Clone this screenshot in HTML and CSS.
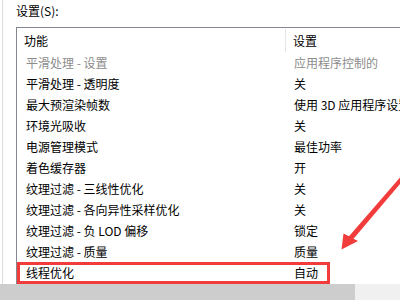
FILE: index.html
```html
<!DOCTYPE html>
<html lang="zh-CN">
<head>
<meta charset="utf-8">
<title>设置</title>
<link rel="stylesheet" href="styles.css">
</head>
<body>
<div class="page">
  <div class="frame">
    <div class="label">设置(S):</div>
    <div class="listbox">
      <div class="row header">
        <div class="c1">功能</div>
        <div class="c2">设置</div>
      </div>
      <div class="row disabled"><div class="c1">平滑处理 - 设置</div><div class="c2">应用程序控制的</div></div>
      <div class="row"><div class="c1">平滑处理 - 透明度</div><div class="c2">关</div></div>
      <div class="row"><div class="c1">最大预渲染帧数</div><div class="c2">使用 3D 应用程序设置</div></div>
      <div class="row"><div class="c1">环境光吸收</div><div class="c2">关</div></div>
      <div class="row"><div class="c1">电源管理模式</div><div class="c2">最佳功率</div></div>
      <div class="row"><div class="c1">着色缓存器</div><div class="c2">开</div></div>
      <div class="row"><div class="c1">纹理过滤 - 三线性优化</div><div class="c2">关</div></div>
      <div class="row"><div class="c1">纹理过滤 - 各向异性采样优化</div><div class="c2">关</div></div>
      <div class="row"><div class="c1">纹理过滤 - 负 LOD 偏移</div><div class="c2">锁定</div></div>
      <div class="row"><div class="c1">纹理过滤 - 质量</div><div class="c2">质量</div></div>
      <div class="row highlight"><div class="c1">线程优化</div><div class="c2">自动</div></div>
    </div>
  </div>
  <div class="hscroll">
    <div class="thumb"></div>
    <div class="track"></div>
  </div>
  <svg class="arrow" width="400" height="300" viewBox="0 0 400 300" aria-hidden="true">
    <polygon points="341.5,249.5 343.5,233.5 349,236.3 400,177.5 400,184 353.5,238.8 358,241" fill="#f23b3b"/>
  </svg>
</div>
</body>
</html>
```
FILE: styles.css
```css
html, body {
  margin: 0;
  padding: 0;
  background: #ffffff;
}
body {
  width: 400px;
  height: 300px;
  overflow: hidden;
  font-family: "Noto Sans CJK SC", "Noto Sans", sans-serif;
  font-size: 12px;
  color: #000000;
}
.page {
  position: relative;
  width: 400px;
  height: 300px;
  overflow: hidden;
}
.frame {
  height: 284px;
  margin-left: 2px;
  border-left: 1px solid #dedede;
  box-sizing: border-box;
  overflow: hidden;
}
.label {
  height: 21px;
  line-height: 21px;
  padding-left: 13px;
  margin-bottom: 6px;
  white-space: nowrap;
}
.listbox {
  margin-left: 13px;
  width: 420px;
  height: 257px;
  border-top: 1px solid #828790;
  border-left: 1px solid #828790;
  box-sizing: border-box;
}
.row {
  display: grid;
  grid-template-columns: 269px 1fr;
  height: 21px;
  line-height: 21px;
  white-space: nowrap;
  position: relative;
}
.row .c1 {
  padding-left: 9px;
}
.row .c2 {
  padding-left: 8px;
  overflow: hidden;
}
.row.header {
  height: 24px;
  line-height: 23px;
}
.row.header .c1 {
  padding-left: 7px;
  margin-top: 1px;
  border-right: 1px solid #e5e5e5;
}
.row.header .c2 {
  padding-left: 7px;
  padding-top: 1px;
}
.row.disabled {
  color: #8c8c8c;
}
.row.highlight::after {
  content: "";
  position: absolute;
  left: 0;
  top: 0;
  width: 313px;
  height: 22px;
  border: 3px solid #f23b3b;
  box-sizing: border-box;
}
.hscroll {
  display: flex;
  height: 16px;
}
.thumb {
  width: 355px;
  background: #cdcdcd;
}
.track {
  flex: 1;
  background: #f0f0f0;
}
.arrow {
  position: absolute;
  left: 0;
  top: 0;
  pointer-events: none;
}
```
